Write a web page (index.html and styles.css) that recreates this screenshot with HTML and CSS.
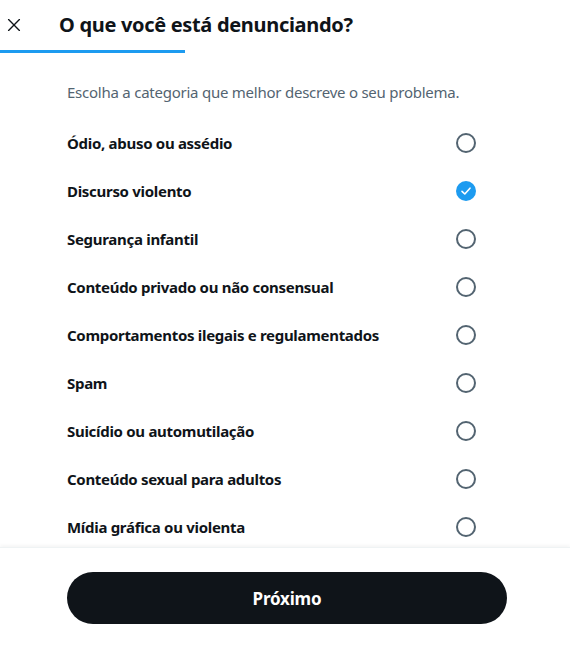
FILE: index.html
```
<!DOCTYPE html>
<html lang="pt">
<head>
    <meta charset="UTF-8">
    <meta name="viewport" content="width=device-width, initial-scale=1.0">
    <title>Denunciar</title>
    <link rel="stylesheet" href="styles.css">
</head>
<body>
    <div class="dialog">
        <div class="header">
            <button class="close-btn" aria-label="Fechar">
                <svg viewBox="0 0 24 24" width="20" height="20">
                    <path d="M5.5 5.5l13 13M18.5 5.5l-13 13" stroke="#0f1419" stroke-width="1.6" fill="none" stroke-linecap="round"/>
                </svg>
            </button>
            <h1>O que você está denunciando?</h1>
        </div>
        <div class="progress"><div class="progress-bar"></div></div>

        <div class="content">
            <p class="subtitle">Escolha a categoria que melhor descreve o seu problema.</p>
            <ul class="options">
                <li class="option"><span>Ódio, abuso ou assédio</span><span class="radio"></span></li>
                <li class="option"><span>Discurso violento</span>
                    <span class="radio checked">
                        <svg viewBox="0 0 20 20" width="20" height="20">
                            <path d="M6 10.3l2.8 2.7 5.2-5.8" stroke="#fff" stroke-width="1.6" fill="none" stroke-linecap="round" stroke-linejoin="round"/>
                        </svg>
                    </span>
                </li>
                <li class="option"><span>Segurança infantil</span><span class="radio"></span></li>
                <li class="option"><span>Conteúdo privado ou não consensual</span><span class="radio"></span></li>
                <li class="option"><span>Comportamentos ilegais e regulamentados</span><span class="radio"></span></li>
                <li class="option"><span>Spam</span><span class="radio"></span></li>
                <li class="option"><span>Suicídio ou automutilação</span><span class="radio"></span></li>
                <li class="option"><span>Conteúdo sexual para adultos</span><span class="radio"></span></li>
                <li class="option"><span>Mídia gráfica ou violenta</span><span class="radio"></span></li>
            </ul>
        </div>

        <div class="footer">
            <button class="next-btn">Próximo</button>
        </div>
    </div>
</body>
</html>
```

FILE: styles.css
```
* {
    box-sizing: border-box;
}

body {
    margin: 0;
    padding: 0;
    font-family: "Noto Sans", "Open Sans", sans-serif;
    color: #0f1419;
    background-color: #ffffff;
}

.dialog {
    height: 647px;
    display: flex;
    flex-direction: column;
    overflow: hidden;
}

.header {
    height: 50px;
    display: flex;
    align-items: center;
}

.close-btn {
    width: 24px;
    height: 24px;
    margin-left: 2px;
    margin-right: 33px;
    padding: 0;
    border: none;
    background: none;
    display: flex;
    align-items: center;
    justify-content: center;
}

h1 {
    margin: 0 0 1px;
    font-size: 20px;
    font-weight: 700;
    letter-spacing: -0.32px;
}

.progress {
    height: 3px;
}

.progress-bar {
    width: 185px;
    height: 3px;
    background-color: #1d9bf0;
}

.content {
    flex: 1;
    overflow: hidden;
    padding: 0 94px 0 67px;
}

.subtitle {
    margin: 0;
    padding: 29px 0 17px;
    font-size: 15px;
    line-height: 20px;
    color: #536471;
    letter-spacing: -0.24px;
}

.options {
    list-style: none;
    margin: 0;
    padding: 0;
}

.option {
    height: 48px;
    display: flex;
    align-items: center;
    justify-content: space-between;
    font-size: 15px;
    font-weight: 700;
    letter-spacing: -0.3px;
}

.radio {
    width: 20px;
    height: 20px;
    border: 2px solid #536471;
    border-radius: 50%;
    flex-shrink: 0;
}

.radio.checked {
    border: none;
    background-color: #1d9bf0;
    display: flex;
}

.footer {
    height: 100px;
    flex-shrink: 0;
    border-top: 1px solid #eff3f4;
    box-shadow: 0 -2px 3px rgba(0, 0, 0, 0.04);
    padding: 24px 63px 0 67px;
}

.next-btn {
    width: 440px;
    height: 52px;
    border: none;
    border-radius: 26px;
    background-color: #0f1419;
    color: #ffffff;
    font-family: inherit;
    font-size: 17px;
    font-weight: 700;
    letter-spacing: -0.2px;
}
```
